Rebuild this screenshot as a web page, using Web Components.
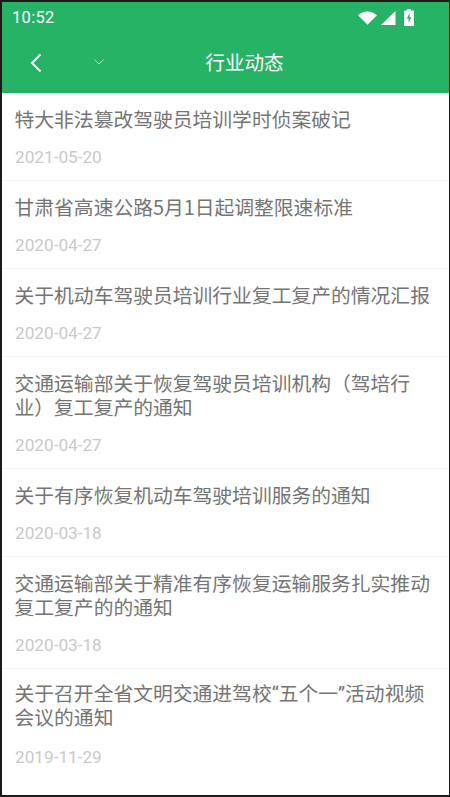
<!DOCTYPE html>
<html lang="zh-CN">
<head>
<meta charset="utf-8">
<title>行业动态</title>
<style>
  html, body { margin: 0; padding: 0; height: 100%; background: #1a1a1a; }
  body { font-family: "Roboto", "Noto Sans CJK SC", sans-serif; overflow: hidden; }
  #screen { box-sizing: border-box; height: 797px; padding: 2px 1px 2px 2px; display: flex; flex-direction: column; }
  #page { flex: 1; background: #fff; display: flex; flex-direction: column; overflow: hidden; }
</style>
</head>
<body>
<div id="screen">
  <div id="page">
    <app-header title="行业动态" time="10:52"></app-header>
    <news-list>
      <news-item date="2021-05-20">特大非法篡改驾驶员培训学时侦案破记</news-item>
      <news-item date="2020-04-27">甘肃省高速公路5月1日起调整限速标准</news-item>
      <news-item date="2020-04-27">关于机动车驾驶员培训行业复工复产的情况汇报</news-item>
      <news-item date="2020-04-27" two>交通运输部关于恢复驾驶员培训机构（驾培行业）复工复产的通知</news-item>
      <news-item date="2020-03-18">关于有序恢复机动车驾驶培训服务的通知</news-item>
      <news-item date="2020-03-18" two>交通运输部关于精准有序恢复运输服务扎实推动复工复产的的通知</news-item>
      <news-item date="2019-11-29" two last latin>关于召开全省文明交通进驾校“五个一”活动视频会议的通知</news-item>
    </news-list>
  </div>
</div>
<script>
class AppHeader extends HTMLElement {
    constructor() {
        super();
        this.shadowDOM = this.attachShadow({ mode: "open" });
    }
    connectedCallback() {
        this.shadowDOM.innerHTML = `
        <style>
        :host { display: block; background: #27b365; color: #fff; flex: none; }
        .status { height: 31px; display: flex; align-items: center; justify-content: space-between; padding: 0 34px 0 10px; }
        .time { font: 400 16.5px "Roboto", sans-serif; letter-spacing: .3px; }
        .icons { display: flex; align-items: center; gap: 3px; }
        .bar { height: 60px; display: flex; align-items: center; position: relative; }
        .back { margin-left: 26px; width: 16px; height: 22px; }
        .caret { margin-left: 49px; margin-top: -3px; width: 12px; height: 8px; }
        h1 { position: absolute; left: 0; right: 0; margin: 0; text-align: center; font: 400 19.6px "Noto Sans CJK SC", sans-serif; padding-left: 38px; padding-bottom: 3px; }
        </style>
        <div class="status">
            <span class="time">${this.getAttribute("time")}</span>
            <span class="icons">
                <svg width="19" height="16" viewBox="0 0 20 16"><path d="M0 5.200C2.800 2.600 6 1.200 10 1.200s7.200 1.400 10 4L10 15.200z" fill="#fff"/></svg>
                <svg width="16" height="16" viewBox="0 0 16 16"><path d="M15.500 1v14H1z" fill="#fff"/></svg>
                <svg width="10" height="17" viewBox="0 0 10 17" style="margin-left:5px;margin-right:1px"><path d="M3.200 0h3.600v1.600H9a1 1 0 0 1 1 1V16a1 1 0 0 1-1 1H1a1 1 0 0 1-1-1V2.600a1 1 0 0 1 1-1h2.200z" fill="#fff"/><path d="M5.600 4 2.800 9.600h1.800V14l2.800-5.800H5.600z" fill="#27b365"/></svg>
            </span>
        </div>
        <div class="bar">
            <svg class="back" viewBox="0 0 16 22"><path d="M12.500 2.500 4 11l8.500 8.500" fill="none" stroke="#fff" stroke-width="2"/></svg>
            <svg class="caret" viewBox="0 0 12 8"><path d="M1.500 1.500 6 6l4.500-4.500" fill="none" stroke="#a9e3c2" stroke-width="1"/></svg>
            <h1>${this.getAttribute("title")}</h1>
        </div>
        `;
    }
}

class NewsList extends HTMLElement {
    constructor() {
        super();
        this.shadowDOM = this.attachShadow({ mode: "open" });
        this.shadowDOM.innerHTML = `
        <style>
        :host { display: flex; flex-direction: column; flex: 1; background: #fff; }
        </style>
        <slot></slot>
        `;
    }
}

class NewsItem extends HTMLElement {
    constructor() {
        super();
        this.shadowDOM = this.attachShadow({ mode: "open" });
    }
    connectedCallback() {
        this.shadowDOM.innerHTML = `
        <style>
        :host { display: block; box-sizing: border-box; padding: 14px 15px 0 12.500px; height: 88px; border-bottom: 1px solid #f3f3f3; flex: none; }
        :host([two]) { height: 112px; }
        :host([last]) { border-bottom: 0; }
        .title { font: 400 19.800px/24px "Noto Sans CJK SC", sans-serif; color: #757575; }
        :host([latin]) .title { font-family: "Roboto", "Noto Sans CJK SC", sans-serif; }
        .date { margin-top: 15px; margin-left: .5px; font: 400 17.200px/22px "Roboto", sans-serif; color: #c9c9c9; }
        </style>
        <div class="title"><slot></slot></div>
        <div class="date">${this.getAttribute("date")}</div>
        `;
    }
}

customElements.define("app-header", AppHeader);
customElements.define("news-list", NewsList);
customElements.define("news-item", NewsItem);
</script>
</body>
</html>
